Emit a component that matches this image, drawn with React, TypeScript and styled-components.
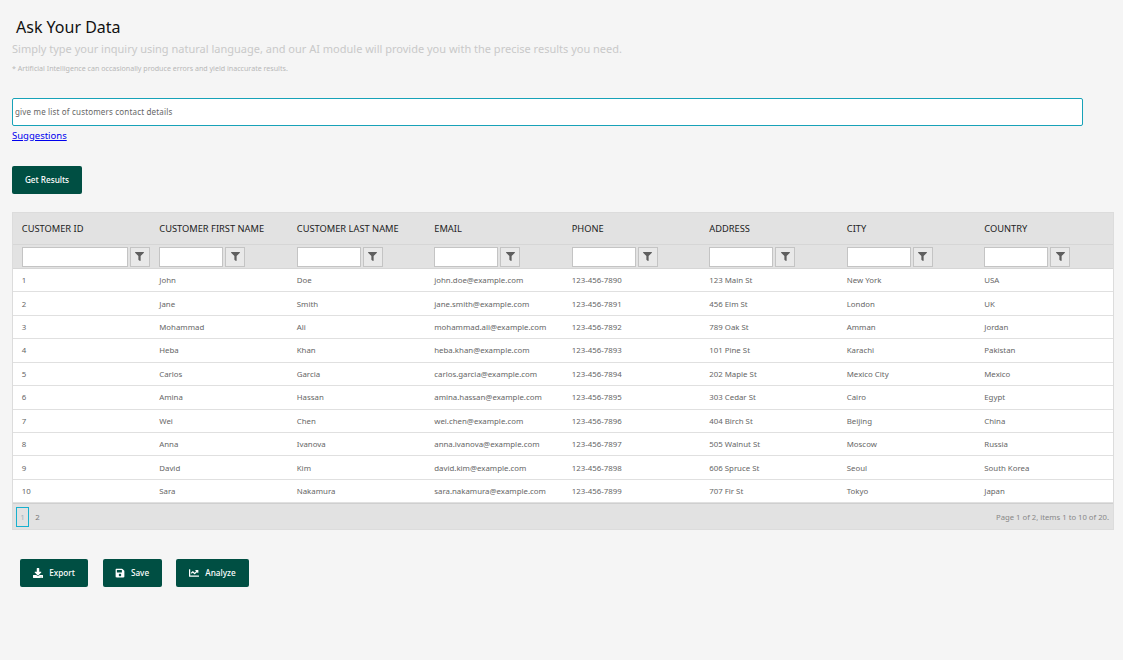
import React from 'react';
import styled, { createGlobalStyle } from 'styled-components';
import { FaDownload, FaSave, FaChartLine, FaFilter } from 'react-icons/fa';

const GlobalStyle = createGlobalStyle`
  html, body {
    margin: 0;
    padding: 0;
    background: #f5f5f5;
    font-family: "Noto Sans", "Open Sans", sans-serif;
  }
`;

const Page = styled.div`
  width: 1123px;
  height: 660px;
  box-sizing: border-box;
  padding: 17px 9px 0 12px;
  overflow: hidden;
`;

const Title = styled.h1`
  margin: 0 0 0 4px;
  font-size: 16px;
  line-height: 20px;
  font-weight: 400;
  color: #111;
`;

const Lead = styled.p`
  margin: 2px 0 0;
  font-size: 11px;
  line-height: 20px;
  color: #c9c9c9;
`;

const Disclaimer = styled.p`
  margin: 3px 0 0;
  font-size: 7.1px;
  line-height: 12px;
  color: #b8b8b8;
`;

const Question = styled.input`
  display: block;
  box-sizing: border-box;
  width: 1071px;
  height: 28px;
  margin-top: 24px;
  padding: 0 2px 1px;
  border: 1px solid #17a2b8;
  border-radius: 2px;
  background: #fff;
  font: 8px "Noto Sans", sans-serif;
  letter-spacing: 0.17px;
  color: #666;
  outline: none;
`;

const SuggestLink = styled.a`
  display: block;
  width: max-content;
  margin-top: 3px;
  font-size: 9.5px;
  line-height: 13px;
  color: #0000ee;
  text-decoration: underline;
`;

const Button = styled.button<{ $width: number }>`
  display: inline-flex;
  align-items: center;
  justify-content: center;
  gap: 6px;
  box-sizing: border-box;
  width: ${p => p.$width}px;
  height: 28px;
  padding: 0 0 1px;
  border: 0;
  border-radius: 2px;
  background: #004f43;
  color: #fff;
  font: 500 8.2px "Noto Sans", sans-serif;
  white-space: nowrap;
`;

const GetResults = styled(Button)`
  margin-top: 24px;
`;

const Grid = styled.div`
  width: 1102px;
  box-sizing: border-box;
  margin-top: 18px;
  border: 1px solid #dcdcdc;
  background: #fff;
`;

const Table = styled.table`
  width: 100%;
  table-layout: fixed;
  border-collapse: collapse;
`;

const HeadCell = styled.th`
  height: 31px;
  padding: 0 0 0 8.75px;
  background: #e2e2e2;
  border-bottom: 1px solid #d6d6d6;
  text-align: left;
  font-size: 9.3px;
  font-weight: 400;
  color: #222;
  white-space: nowrap;
`;

const FilterCell = styled.td`
  height: 23px;
  padding: 0 0 0 8.75px;
  background: #e2e2e2;
  border-bottom: 1px solid #d6d6d6;
`;

const FilterWrap = styled.div`
  display: flex;
  align-items: center;
  gap: 2px;
`;

const FilterInput = styled.input<{ $wide?: boolean }>`
  box-sizing: border-box;
  width: ${p => (p.$wide ? '106px' : '64px')};
  height: 20px;
  padding: 0;
  border: 1px solid #c4c4c4;
  background: #fff;
`;

const FilterButton = styled.button`
  display: flex;
  align-items: center;
  justify-content: center;
  box-sizing: border-box;
  width: 20px;
  height: 20px;
  padding: 0;
  border: 1px solid #c4c4c4;
  background: #e9e9e9;
  color: #5f5f5f;
  font-size: 9px;
`;

const Cell = styled.td`
  height: 22.43px;
  padding: 0 0 0 8.75px;
  border-bottom: 1px solid #e0e0e0;
  font-size: 7.85px;
  color: #666;
  white-space: nowrap;
`;

const Pager = styled.div`
  display: flex;
  align-items: center;
  justify-content: space-between;
  height: 25px;
  padding: 0 4px 0 3px;
  background: #e2e2e2;
  border-top: 1px solid #cfcfcf;
`;

const Pages = styled.div`
  display: flex;
  align-items: center;
  gap: 2px;
`;

const PageNum = styled.span<{ $current?: boolean }>`
  display: flex;
  align-items: center;
  justify-content: center;
  box-sizing: border-box;
  width: 13px;
  height: 20px;
  border: ${p => (p.$current ? '1px solid #17b0ce' : '0')};
  font-size: 7.85px;
  color: ${p => (p.$current ? '#9db4bd' : '#777')};
`;

const PagerInfo = styled.span`
  font-size: 7.7px;
  color: #888;
`;

const Actions = styled.div`
  display: flex;
  gap: 14.5px;
  margin: 29px 0 0 8px;
`;

const columns = [
  'CUSTOMER ID',
  'CUSTOMER FIRST NAME',
  'CUSTOMER LAST NAME',
  'EMAIL',
  'PHONE',
  'ADDRESS',
  'CITY',
  'COUNTRY',
];

const rows = [
  ['1', 'John', 'Doe', 'john.doe@example.com', '123-456-7890', '123 Main St', 'New York', 'USA'],
  ['2', 'Jane', 'Smith', 'jane.smith@example.com', '123-456-7891', '456 Elm St', 'London', 'UK'],
  ['3', 'Mohammad', 'Ali', 'mohammad.ali@example.com', '123-456-7892', '789 Oak St', 'Amman', 'Jordan'],
  ['4', 'Heba', 'Khan', 'heba.khan@example.com', '123-456-7893', '101 Pine St', 'Karachi', 'Pakistan'],
  ['5', 'Carlos', 'Garcia', 'carlos.garcia@example.com', '123-456-7894', '202 Maple St', 'Mexico City', 'Mexico'],
  ['6', 'Amina', 'Hassan', 'amina.hassan@example.com', '123-456-7895', '303 Cedar St', 'Cairo', 'Egypt'],
  ['7', 'Wei', 'Chen', 'wei.chen@example.com', '123-456-7896', '404 Birch St', 'Beijing', 'China'],
  ['8', 'Anna', 'Ivanova', 'anna.ivanova@example.com', '123-456-7897', '505 Walnut St', 'Moscow', 'Russia'],
  ['9', 'David', 'Kim', 'david.kim@example.com', '123-456-7898', '606 Spruce St', 'Seoul', 'South Korea'],
  ['10', 'Sara', 'Nakamura', 'sara.nakamura@example.com', '123-456-7899', '707 Fir St', 'Tokyo', 'Japan'],
];

function App() {
  return (
    <Page>
      <GlobalStyle />
      <Title>Ask Your Data</Title>
      <Lead>Simply type your inquiry using natural language, and our AI module will provide you with the precise results you need.</Lead>
      <Disclaimer>* Artificial Intelligence can occasionally produce errors and yield inaccurate results.</Disclaimer>
      <Question defaultValue="give me list of customers contact details" />
      <SuggestLink href="#">Suggestions</SuggestLink>
      <GetResults $width={70}>Get Results</GetResults>

      <Grid>
        <Table>
          <thead>
            <tr>
              {columns.map(c => (
                <HeadCell key={c}>{c}</HeadCell>
              ))}
            </tr>
            <tr>
              {columns.map((c, i) => (
                <FilterCell key={c}>
                  <FilterWrap>
                    <FilterInput $wide={i === 0} />
                    <FilterButton>
                      <FaFilter />
                    </FilterButton>
                  </FilterWrap>
                </FilterCell>
              ))}
            </tr>
          </thead>
          <tbody>
            {rows.map(r => (
              <tr key={r[0]}>
                {r.map((v, i) => (
                  <Cell key={i}>{v}</Cell>
                ))}
              </tr>
            ))}
          </tbody>
        </Table>
        <Pager>
          <Pages>
            <PageNum $current>1</PageNum>
            <PageNum>2</PageNum>
          </Pages>
          <PagerInfo>Page 1 of 2, items 1 to 10 of 20.</PagerInfo>
        </Pager>
      </Grid>

      <Actions>
        <Button $width={68}><FaDownload size={10} />Export</Button>
        <Button $width={59}><FaSave size={10} />Save</Button>
        <Button $width={73}><FaChartLine size={10} />Analyze</Button>
      </Actions>
    </Page>
  );
}

export default App;
